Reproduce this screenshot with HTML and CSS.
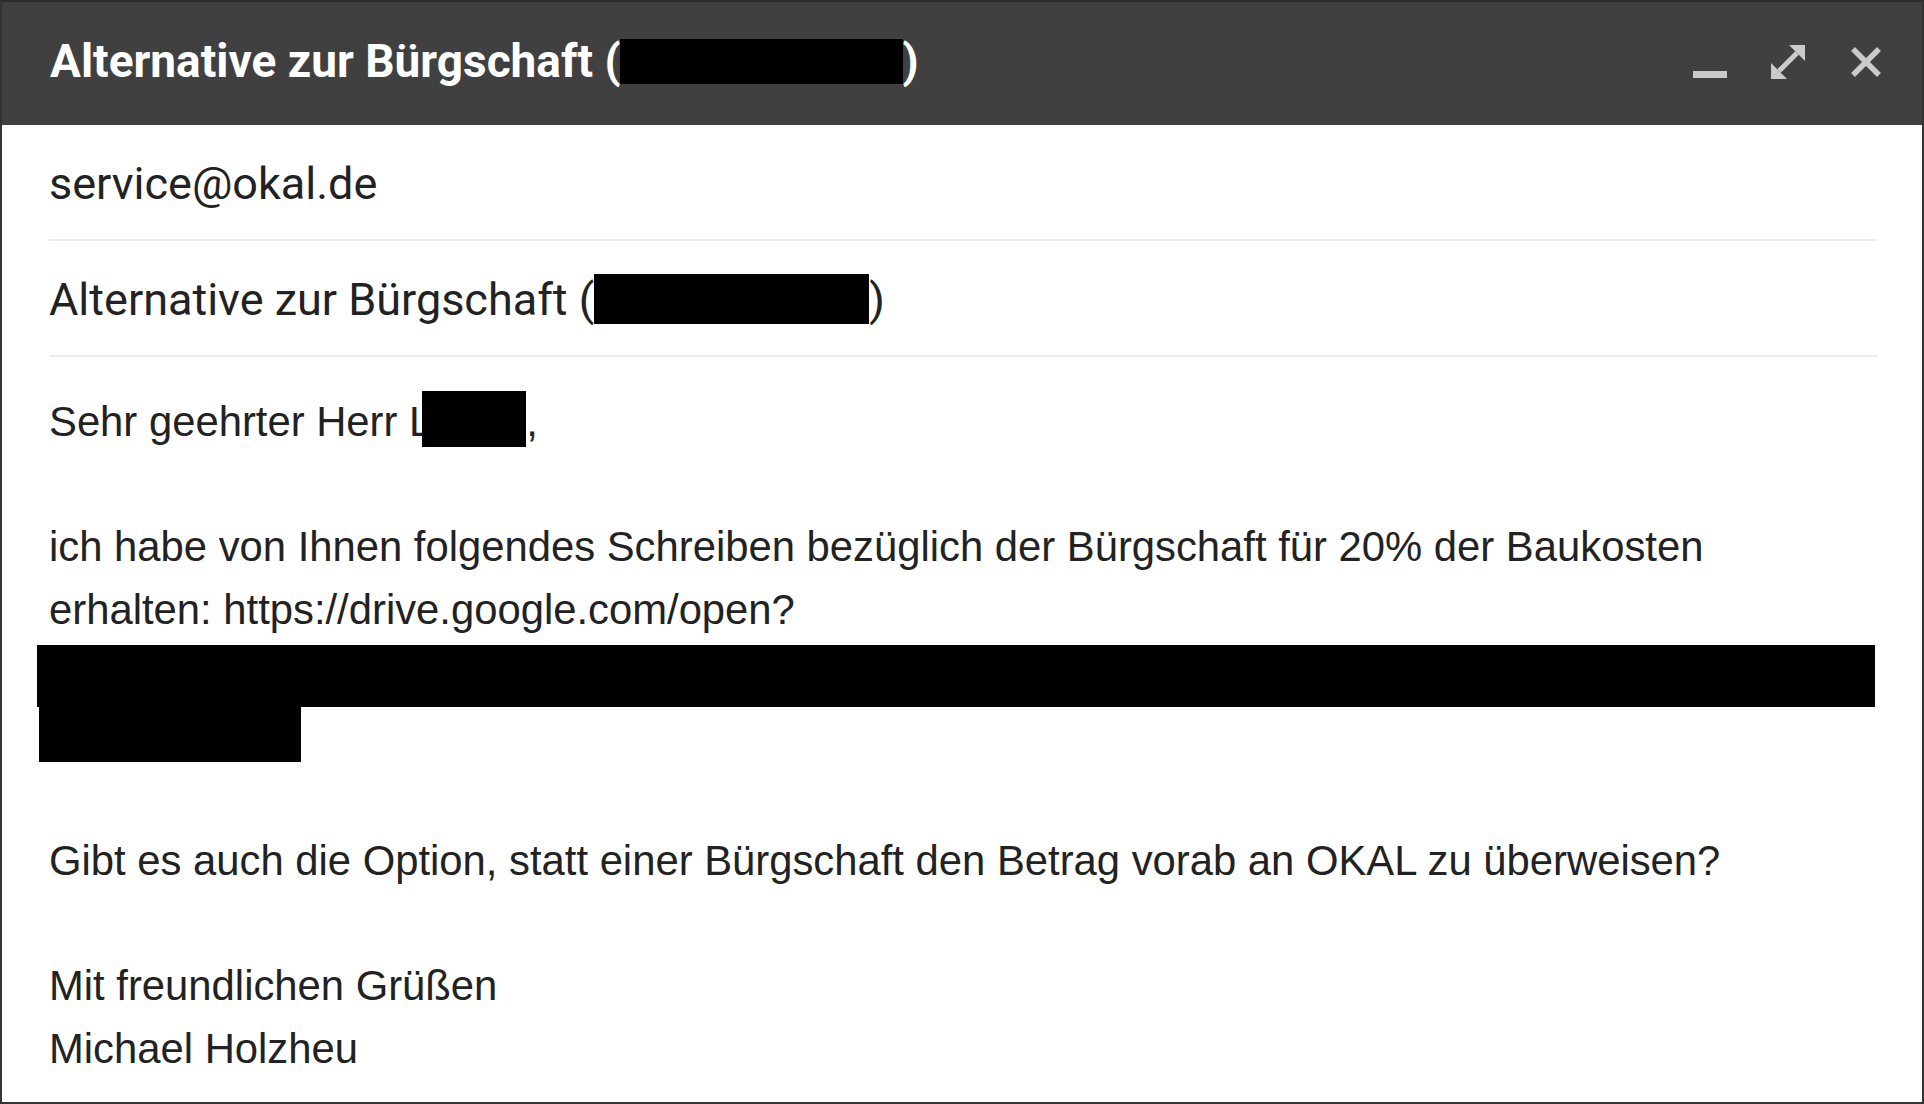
FILE: index.html
```html
<!doctype html>
<html>
<head>
<meta charset='utf-8' />
<title>Alternative zur Bürgschaft</title>
<link rel="stylesheet" href="styles.css">
</head>
<body>
<div class="compose">
	<div class="head">
		<h3 class="title">Alternative zur Bürgschaft (<span class="redact r-title"></span>)</h3>
		<div class="tools">
			<svg class="ico" viewBox="0 0 36 36"><rect x="1" y="27" width="34" height="7" fill="currentColor"/></svg>
			<svg class="ico" viewBox="0 0 36 36">
				<line x1="9" y1="27" x2="27" y2="9" stroke="currentColor" stroke-width="5"/>
				<polygon points="35,1 35,17 19,1" fill="currentColor"/>
				<polygon points="1,35 1,19 17,35" fill="currentColor"/>
			</svg>
			<svg class="ico" viewBox="0 0 36 36">
				<line x1="5" y1="5" x2="31" y2="31" stroke="currentColor" stroke-width="5.5"/>
				<line x1="31" y1="5" x2="5" y2="31" stroke="currentColor" stroke-width="5.5"/>
			</svg>
		</div>
	</div>
	<div class="field">service@okal.de</div>
	<div class="field">Alternative zur Bürgschaft (<span class="redact r-subj"></span>)</div>
	<div class="msg">
		<p>Sehr geehrter Herr L<span class="redact r-name"></span>,</p>
		<p class="tight">ich habe von Ihnen folgendes Schreiben bezüglich der Bürgschaft für 20% der Baukosten<br>erhalten: https://drive.google.com/open?</p>
		<div class="url">
			<div class="bar-long"></div>
			<div class="bar-short"></div>
		</div>
		<p>Gibt es auch die Option, statt einer Bürgschaft den Betrag vorab an OKAL zu überweisen?</p>
		<p class="tight">Mit freundlichen Grüßen<br>Michael Holzheu</p>
	</div>
</div>
</body>
</html>
```

FILE: styles.css
```css
*{margin: 0;padding: 0;box-sizing: border-box;}
body{background: #fff;overflow: hidden;}
.compose{width: 1924px;height: 1104px;border: 2px solid #333;border-top-color: #2a2a2a;display: flex;flex-direction: column;background: #fff;overflow: hidden;}
.compose>*{flex-shrink: 0;}

.head{height: 123px;background: #404040;display: flex;align-items: center;padding: 0 38px 0 48px;}
.title{flex: 1;font: 700 46px/60px Roboto, "Liberation Sans", sans-serif;color: #fff;margin-bottom: 6px;white-space: nowrap;}
.tools{display: flex;align-items: center;gap: 42px;color: #cbcbcb;margin-bottom: 3px;}
.ico{width: 36px;height: 36px;display: block;}

.redact{display: inline-block;background: #000;}
.r-title{width: 283px;height: 45px;vertical-align: -7px;margin-left: -1px;}
.r-subj{width: 275px;height: 50px;vertical-align: -9px;}
.r-name{width: 104px;height: 56px;vertical-align: -11px;margin-left: -10px;}

.field{margin: 0 45px 0 47px;padding: 29px 0 25px;border-bottom: 2px solid #ececec;font: 400 45px/60px Roboto, "Liberation Sans", sans-serif;color: #222;white-space: nowrap;}

.msg{--lh: 62.7px;padding: 34px 45px 0 47px;font: 400 41.8px/var(--lh) "Liberation Sans", Arial, sans-serif;color: #222;}
.msg p{margin-bottom: var(--lh);}
.msg p.tight{margin-bottom: 0;}
.url{height: calc(var(--lh) * 2);margin-bottom: var(--lh);padding-top: 3px;}
.bar-long{height: 62px;margin: 0 2px 0 -12px;background: #000;}
.bar-short{width: 262px;height: 55px;margin-left: -10px;background: #000;}
```
